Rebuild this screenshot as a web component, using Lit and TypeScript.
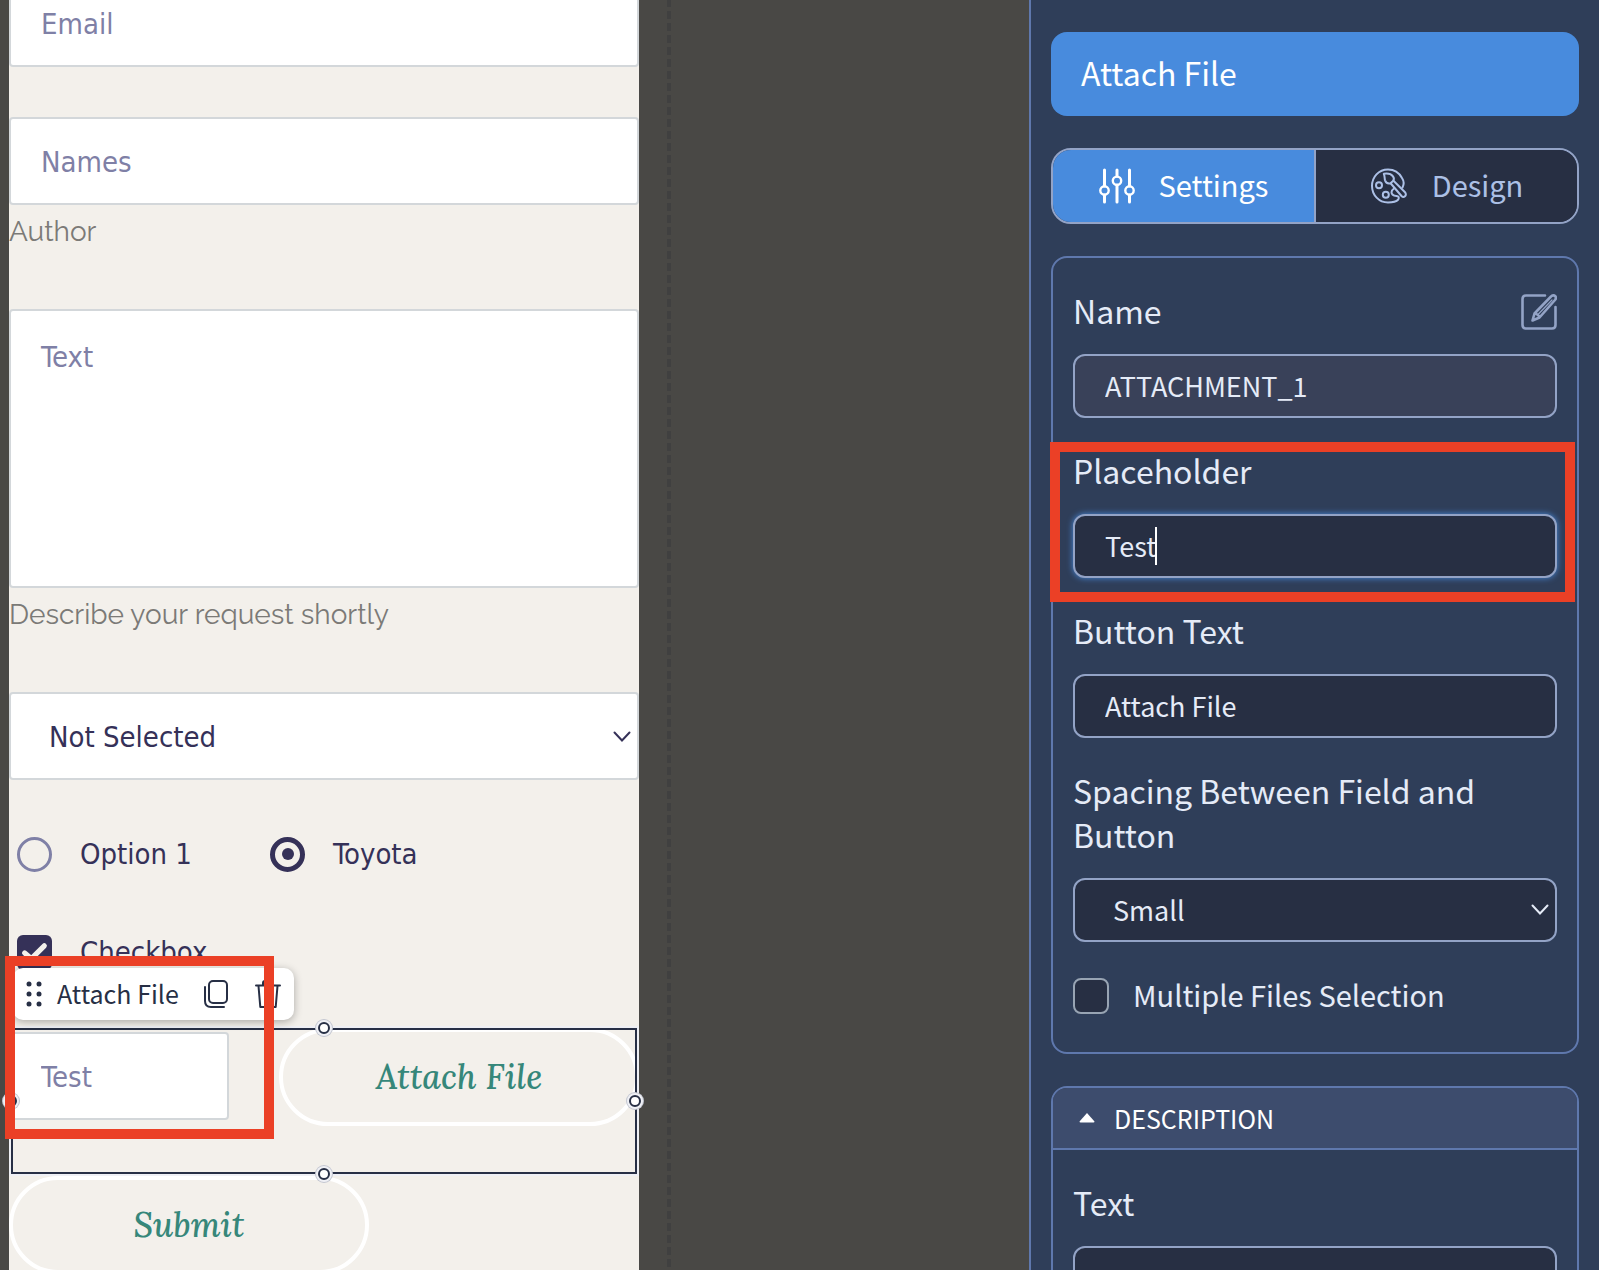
import { LitElement, html, css, svg } from "lit";
import { customElement } from "lit/decorators.js";

const slidersIcon = svg`<svg class="icon" width="36" height="36" viewBox="0 0 36 36" fill="none" stroke="currentColor" stroke-width="3" stroke-linecap="round" aria-hidden="true">
  <path d="M5.500 2V18M5.500 27V34M18 2V8M18 17V34M30.500 2V18M30.500 27V34"/>
  <circle cx="5.500" cy="22.500" r="4.200" stroke-width="2.400"/><circle cx="18" cy="12.800" r="4.200" stroke-width="2.400"/><circle cx="30.500" cy="22.500" r="4.200" stroke-width="2.400"/>
</svg>`;

const paletteIcon = svg`<svg class="icon" width="38" height="36" viewBox="0 0 38 36" fill="none" stroke="currentColor" stroke-width="2" stroke-linecap="round" stroke-linejoin="round" aria-hidden="true">
  <path d="M32.500 19.500C34 16.500 34 13 32 10C29 4.500 24 1.500 18 1.500C8.600 1.500 2 9 2 18S9 34.500 18 34.500C22 34.500 26.500 33.500 28.300 31.500C29.500 29.500 28.500 28.300 26.500 28C23.500 27.700 21.500 26.500 21.500 24.300C21.500 22.500 22.500 21.500 24 20.500"/>
  <circle cx="9" cy="17.300" r="3"/><circle cx="15.800" cy="26.700" r="3"/>
  <path d="M13.800 5.800C17 5.300 21 5.800 23 8.300C24 9.700 23.800 12 23 13L20.500 15.300C18 15.800 15.800 15 15 12.300C14.500 10 14.800 8 13.800 5.800Z"/>
  <path d="M23.500 12.800L35 24.200C36.300 25.600 36 27.300 35 28.200C34 29.100 32.500 29 31.500 28L20.800 15.500"/>
</svg>`;

const editIcon = svg`<svg width="36" height="36" viewBox="0 0 36 36" fill="none" stroke="currentColor" stroke-width="2.600" stroke-linecap="round" stroke-linejoin="round" aria-hidden="true">
  <path d="M24 1.500H5C2.500 1.500 1.500 2.500 1.500 5V31C1.500 33.500 2.500 34.500 5 34.500H31C33.500 34.500 34.500 33.500 34.500 31V13"/>
  <path d="M30 2.500C31.200 1.100 33.200 1.100 34.200 2.200C35.200 3.300 35 4.800 34 6L18.500 23.500L11.500 26.500L13.500 19.500ZM13.500 19.500C15.500 19.500 18.200 21.500 18.500 23.500"/>
  <path d="M31 6L17 20.500" stroke-width="1.200"/>
</svg>`;

const gripIcon = svg`<svg width="16" height="26" viewBox="0 0 16 26" fill="currentColor" aria-hidden="true">
  <circle cx="3" cy="3" r="2.500"/><circle cx="13" cy="3" r="2.500"/><circle cx="3" cy="13" r="2.500"/><circle cx="13" cy="13" r="2.500"/><circle cx="3" cy="23" r="2.500"/><circle cx="13" cy="23" r="2.500"/>
</svg>`;

const copyIcon = svg`<svg width="26" height="28" viewBox="0 0 26 28" fill="none" stroke="currentColor" stroke-width="2" stroke-linecap="round" aria-hidden="true">
  <rect x="6" y="1" width="18" height="22" rx="4"/><path d="M2 7V21C2 25 4 27 8 27H21"/>
</svg>`;

const trashIcon = svg`<svg width="28" height="28" viewBox="0 0 28 28" fill="none" stroke="currentColor" stroke-width="2" stroke-linecap="round" stroke-linejoin="round" aria-hidden="true">
  <path d="M2 5.500H26M9 5V3C9 1.600 9.600 1 11 1H17C18.400 1 19 1.600 19 3V5M4.500 6L6.300 27H21.700L23.500 6"/>
</svg>`;

const chevron = svg`<svg class="chevron" width="18" height="12" viewBox="0 0 18 12" fill="none" stroke="currentColor" stroke-width="2" stroke-linecap="round" aria-hidden="true"><path d="M1.500 1.500L9 9.500L16.500 1.500"/></svg>`;

@customElement("form-canvas")
class FormCanvas extends LitElement {
  static styles = css`
    :host {
      flex: 1;
      min-width: 0;
      display: grid;
      grid-template-columns: 630fr 390fr;
      padding-left: 9px;
      background: #494845;
      font-family: Tahoma, "DejaVu Sans Condensed", "DejaVu Sans", sans-serif;
      font-size: 29px;
      color: #353158;
    }
    * { box-sizing: border-box; }
    .form { background: #f3f0eb; min-width: 0; }
    .fields { display: flex; flex-direction: column; gap: 50px; margin-top: -21px; }
    .guide { padding-left: 28px; }
    .guide-line {
      width: 4px;
      height: 100%;
      background: repeating-linear-gradient(#404040 0 7px, #494845 7px 11px, #404040 11px 12px);
    }
    .text-field {
      display: block;
      width: 100%;
      height: 88px;
      margin: 0;
      padding: 2px 30px 0;
      border: 2px solid #d3d7da;
      border-radius: 4px;
      background: #fff;
      color: inherit;
      font: inherit;
      outline: none;
    }
    .text-field::placeholder { color: #7f80a6; opacity: 1; }
    .area { height: 279px; padding: 28px 30px; line-height: 36px; resize: none; }
    .help {
      display: block;
      height: 54px;
      font: 28px/54px Raleway, Lato, sans-serif;
      color: #7b7a77;
    }
    .select-wrap { position: relative; }
    select.text-field { appearance: none; padding-left: 38px; }
    .chevron { position: absolute; right: 8px; top: 39px; pointer-events: none; }
    .options { display: flex; height: 48px; padding-left: 8px; }
    .option { display: flex; align-items: center; gap: 28px; flex: 0 0 253px; }
    .mark {
      appearance: none;
      display: grid;
      place-items: center;
      flex: none;
      width: 35px;
      height: 35px;
      margin: 0;
      border: 3px solid #7f80a6;
      border-radius: 50%;
    }
    .mark:checked { border: 5px solid #353158; }
    .mark:checked::after { content: ""; width: 12px; height: 12px; border-radius: 50%; background: #353158; }
    .tick-wrap { display: grid; flex: none; color: #f3f0eb; }
    .tick-wrap > * { grid-area: 1 / 1; }
    .tick { appearance: none; width: 35px; height: 35px; margin: 0; border-radius: 6px; background: #353158; }
    .attachment {
      position: relative;
      display: grid;
      grid-template-columns: 220px 1fr;
      gap: 50px;
      align-items: start;
      height: 148px;
      margin-top: 2px;
    }
    .attachment > .text-field { margin-top: 4px; }
    .pill {
      height: 98px;
      padding: 0;
      border: 4px solid #fff;
      border-radius: 49px;
      background: none;
      color: #36877a;
      font: italic 500 34px/40px Lora, "Liberation Serif", serif;
    }
    .submit { width: 360px; }
    .selection {
      position: absolute;
      inset: 0 2px 2px 2px;
      border: 2px solid #272f45;
      box-shadow: 0 0 0 2px #eff0f5;
      pointer-events: none;
    }
    .handle {
      position: absolute;
      width: 12px;
      height: 12px;
      border: 2px solid #272f45;
      border-radius: 50%;
      background: #fff;
      box-shadow: 0 0 0 2px #eff0f5, 0 0 0 3px #c3c6d0;
      translate: -50% -50%;
    }
    .north { left: 50%; top: -2px; }
    .south { left: 50%; top: calc(100% + 2px); }
    .west { left: -2px; top: 50%; }
    .east { left: 100%; top: 50%; }
    .toolbar {
      position: absolute;
      left: 4px;
      bottom: calc(100% + 8px);
      display: flex;
      align-items: center;
      height: 52px;
      padding: 0 12px 0 13px;
      border-radius: 10px;
      background: #fff;
      box-shadow: 0 2px 8px #0000004d;
      color: #272f45;
      font: 25px/32px "Source Sans Pro", "Noto Sans CJK SC", sans-serif;
      white-space: nowrap;
    }
    .tool { display: flex; padding: 0; border: 0; background: none; color: inherit; }
    .toolbar-name { margin: 0 24px 0 15px; padding-bottom: 2px; }
    .tool + .tool { margin-left: 25px; }
    .callout {
      position: absolute;
      left: -4px;
      top: -72px;
      width: 269px;
      height: 183px;
      border: 10px solid #eb4026;
      pointer-events: none;
    }
  `;

  render() {
    return html`
      <form class="form" @submit=${(e: Event) => e.preventDefault()}>
        <div class="fields">
          <input class="text-field" type="email" placeholder="Email" aria-label="Email" />
          <div>
            <input class="text-field" type="text" placeholder="Names" aria-label="Names" aria-describedby="names-help" />
            <span class="help" id="names-help">Author</span>
          </div>
          <div>
            <textarea class="text-field area" placeholder="Text" aria-label="Text" aria-describedby="text-help"></textarea>
            <span class="help" id="text-help">Describe your request shortly</span>
          </div>
          <div class="select-wrap">
            <select class="text-field" aria-label="Selection"><option>Not Selected</option></select>
            ${chevron}
          </div>
          <div class="options">
            <label class="option"><input class="mark" type="radio" name="choice" />Option 1</label>
            <label class="option"><input class="mark" type="radio" name="choice" checked />Toyota</label>
          </div>
          <div class="options">
            <label class="option">
              <span class="tick-wrap">
                <input class="tick" type="checkbox" checked />
                <svg width="35" height="35" viewBox="0 0 34 34" fill="none" stroke="currentColor" stroke-width="5" stroke-linecap="round" stroke-linejoin="round" aria-hidden="true"><path d="M7.500 17.500L14 23L26.500 10.500" /></svg>
              </span>
              Checkbox
            </label>
          </div>
          <div class="attachment">
            <input class="text-field" type="text" placeholder="Test" aria-label="Attachment" />
            <button class="pill" type="button">Attach File</button>
            <div class="selection">
              <span class="handle north"></span><span class="handle south"></span>
              <span class="handle west"></span><span class="handle east"></span>
            </div>
            <div class="toolbar">
              <button class="tool" type="button" aria-label="Move">${gripIcon}</button>
              <span class="toolbar-name">Attach File</span>
              <button class="tool" type="button" aria-label="Duplicate">${copyIcon}</button>
              <button class="tool" type="button" aria-label="Delete">${trashIcon}</button>
            </div>
            <div class="callout"></div>
          </div>
        </div>
        <button class="pill submit" type="submit">Submit</button>
      </form>
      <div class="guide"><div class="guide-line"></div></div>
    `;
  }
}

@customElement("settings-panel")
class SettingsPanel extends LitElement {
  static styles = css`
    :host {
      box-sizing: border-box;
      flex: 0 0 570px;
      display: flex;
      flex-direction: column;
      gap: 32px;
      padding: 32px 20px 0;
      border-left: 2px solid #5f78ad;
      background: #2f3e59;
      color: #e5ebf7;
      font: 32px/44px "Source Sans Pro", "Noto Sans CJK SC", sans-serif;
    }
    * { box-sizing: border-box; }
    .title, .tabs, .card { flex: none; }
    .title {
      margin: 0;
      padding: 18px 30px 22px;
      border-radius: 16px;
      background: #488bdd;
      color: #fff;
      font: inherit;
    }
    .tabs {
      display: flex;
      height: 76px;
      border: 2px solid #93a3c6;
      border-radius: 20px;
      overflow: hidden;
    }
    .tab {
      flex: 1;
      display: flex;
      align-items: center;
      justify-content: center;
      gap: 24px;
      padding: 0;
      border: 0;
      background: #272f43;
      color: #acc0e6;
      font: 29px/40px "Source Sans Pro", "Noto Sans CJK SC", sans-serif;
    }
    .caption { padding-bottom: 4px; }
    .tab.active { background: #488bdd; color: #fff; }
    .tab + .tab { border-left: 2px solid #93a3c6; }
    .card { border: 2px solid #5f78ad; border-radius: 16px; }
    .body { display: flex; flex-direction: column; gap: 30px; padding: 30px 20px 32px; }
    .head { display: flex; justify-content: space-between; align-items: center; margin-bottom: 22px; }
    .edit { display: flex; padding: 4px 0 0; border: 0; background: none; color: #93a3c6; }
    .box { position: relative; }
    .control {
      display: block;
      width: 100%;
      height: 64px;
      margin: 0;
      padding: 0 30px 2px;
      border: 2px solid #93a3c6;
      border-radius: 12px;
      background: #272f43;
      color: inherit;
      font: 27px/40px "Source Sans Pro", "Noto Sans CJK SC", sans-serif;
      outline: none;
    }
    select.control { appearance: none; padding-left: 38px; padding-bottom: 0; }
    .locked { background: #394159; }
    .focused { box-shadow: 0 0 6px #488bdd; }
    .caret { position: absolute; left: 82px; top: 13px; width: 2px; height: 38px; background: #fff; }
    .chevron { position: absolute; right: 8px; top: 26px; pointer-events: none; }
    .check { display: flex; align-items: center; gap: 24px; height: 48px; font-size: 29px; }
    .check-box {
      appearance: none;
      width: 36px;
      height: 36px;
      margin: 0;
      border: 2px solid #98a4b3;
      border-radius: 8px;
      background: #272f43;
    }
    .accordion {
      display: flex;
      align-items: center;
      gap: 19px;
      width: 100%;
      height: 62px;
      padding: 0 26px;
      border: 0;
      border-bottom: 2px solid #5f78ad;
      border-radius: 14px 14px 0 0;
      background: #3d4c6d;
      color: #fff;
      font: 25px/40px "Source Sans Pro", "Noto Sans CJK SC", sans-serif;
    }
    .highlight { position: relative; }
    .callout {
      position: absolute;
      left: -23px;
      right: -18px;
      top: -6px;
      bottom: -24px;
      border: 10px solid #eb4026;
      pointer-events: none;
    }
  `;

  render() {
    return html`
      <h2 class="title">Attach File</h2>
      <div class="tabs" role="tablist">
        <button class="tab active" role="tab" aria-selected="true">${slidersIcon}<span class="caption">Settings</span></button>
        <button class="tab" role="tab" aria-selected="false">${paletteIcon}<span class="caption">Design</span></button>
      </div>
      <section class="card">
        <div class="body">
          <div>
            <div class="head"><label for="name">Name</label><button class="edit" aria-label="Edit name">${editIcon}</button></div>
            <input class="control locked" id="name" type="text" readonly value="ATTACHMENT_1" />
          </div>
          <div class="highlight">
            <div class="head"><label for="placeholder">Placeholder</label></div>
            <div class="box">
              <input class="control focused" id="placeholder" type="text" value="Test" />
              <span class="caret"></span>
            </div>
            <div class="callout"></div>
          </div>
          <div>
            <div class="head"><label for="button-text">Button Text</label></div>
            <input class="control" id="button-text" type="text" value="Attach File" />
          </div>
          <div>
            <div class="head"><label for="spacing">Spacing Between Field and Button</label></div>
            <div class="box">
              <select class="control" id="spacing"><option>Small</option></select>
              ${chevron}
            </div>
          </div>
          <label class="check"><input class="check-box" type="checkbox" /><span class="caption">Multiple Files Selection</span></label>
        </div>
      </section>
      <section class="card">
        <button class="accordion" aria-expanded="true">
          <svg width="16" height="10" viewBox="0 0 16 10" fill="currentColor" aria-hidden="true"><path d="M8 0L15.500 8.500Q15.500 9.500 14.500 9.500H1.500Q.500 9.500 .500 8.500Z" /></svg>
          DESCRIPTION
        </button>
        <div class="body">
          <div>
            <div class="head"><label for="description">Text</label></div>
            <input class="control" id="description" type="text" />
          </div>
        </div>
      </section>
    `;
  }
}

@customElement("app-root")
class AppRoot extends LitElement {
  static styles = css`
    :host { display: flex; height: 100vh; overflow: hidden; }
  `;

  render() {
    return html`<form-canvas></form-canvas><settings-panel></settings-panel>`;
  }
}
